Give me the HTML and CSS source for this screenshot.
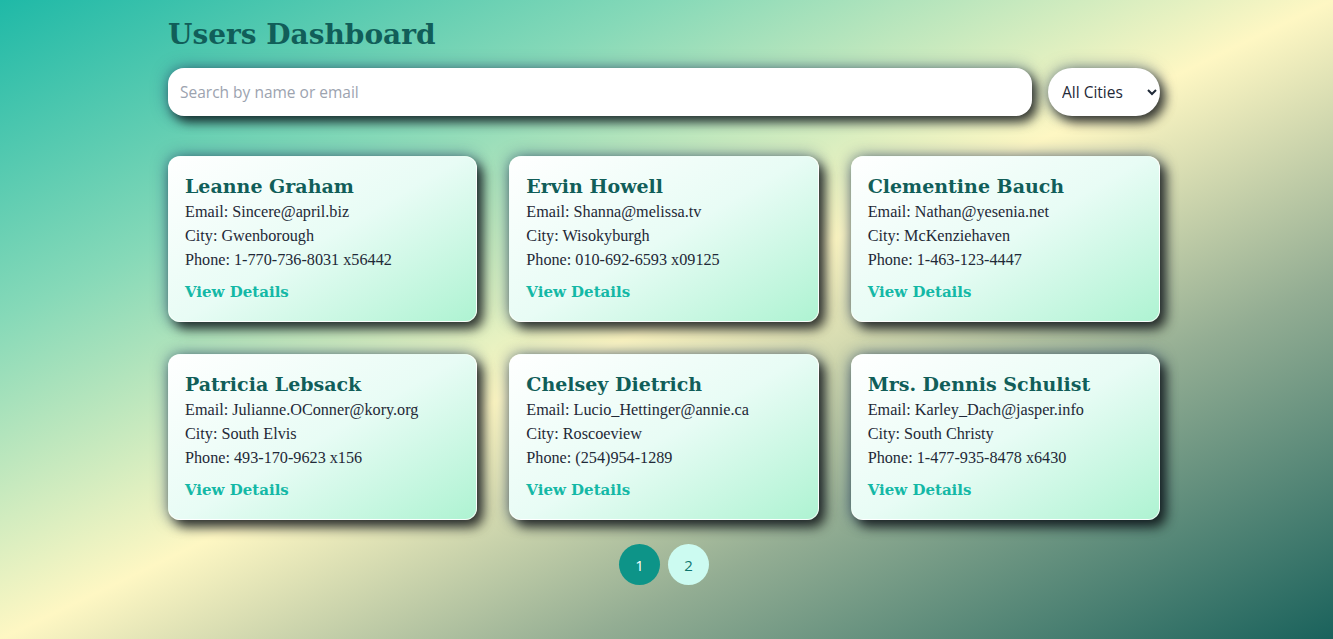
FILE: index.html
```html
<!DOCTYPE html>
<html lang="en">
<head>
<meta charset="utf-8">
<title>Users Dashboard</title>
<link rel="stylesheet" href="styles.css">
</head>
<body>
<div class="page">
  <h1 class="title">Users Dashboard</h1>
  <div class="filters">
    <input class="search" type="text" placeholder="Search by name or email">
    <select class="city">
      <option>All Cities</option>
    </select>
  </div>
  <div class="grid">
    <div class="card">
      <h2 class="name">Leanne Graham</h2>
      <p class="line">Email: Sincere@april.biz</p>
      <p class="line">City: Gwenborough</p>
      <p class="line">Phone: 1-770-736-8031 x56442</p>
      <a class="details" href="#">View Details</a>
    </div>
    <div class="card">
      <h2 class="name">Ervin Howell</h2>
      <p class="line">Email: Shanna@melissa.tv</p>
      <p class="line">City: Wisokyburgh</p>
      <p class="line">Phone: 010-692-6593 x09125</p>
      <a class="details" href="#">View Details</a>
    </div>
    <div class="card">
      <h2 class="name">Clementine Bauch</h2>
      <p class="line">Email: Nathan@yesenia.net</p>
      <p class="line">City: McKenziehaven</p>
      <p class="line">Phone: 1-463-123-4447</p>
      <a class="details" href="#">View Details</a>
    </div>
    <div class="card">
      <h2 class="name">Patricia Lebsack</h2>
      <p class="line">Email: Julianne.OConner@kory.org</p>
      <p class="line">City: South Elvis</p>
      <p class="line">Phone: 493-170-9623 x156</p>
      <a class="details" href="#">View Details</a>
    </div>
    <div class="card">
      <h2 class="name">Chelsey Dietrich</h2>
      <p class="line">Email: Lucio_Hettinger@annie.ca</p>
      <p class="line">City: Roscoeview</p>
      <p class="line">Phone: (254)954-1289</p>
      <a class="details" href="#">View Details</a>
    </div>
    <div class="card">
      <h2 class="name">Mrs. Dennis Schulist</h2>
      <p class="line">Email: Karley_Dach@jasper.info</p>
      <p class="line">City: South Christy</p>
      <p class="line">Phone: 1-477-935-8478 x6430</p>
      <a class="details" href="#">View Details</a>
    </div>
  </div>
  <div class="pager">
    <button class="pg active">1</button>
    <button class="pg">2</button>
  </div>
</div>
</body>
</html>
```

FILE: styles.css
```css
* { box-sizing: border-box; }
html { height: 100%; }
body {
  margin: 0;
  min-height: 100%;
  font-family: "DejaVu Serif", Georgia, serif;
  color: #1f2937;
  background: linear-gradient(to bottom right, #1fb9a7 0%, #86d9b8 25%, #fef7c3 50%, #93ad93 72%, #1a625c 100%);
}
.page {
  width: 992px;
  margin: 0 0 0 calc(50% - 498.5px);
  padding: 17px 0 40px;
}
.title {
  margin: 0 0 15px;
  font-size: 28px;
  line-height: 36px;
  font-weight: bold;
  color: #115e59;
}
.filters {
  display: flex;
  gap: 16px;
  margin-bottom: 40px;
}
.search {
  flex: 1;
  height: 48px;
  border: none;
  border-radius: 16px;
  padding: 0 12px;
  font-family: "Open Sans", "Noto Sans", sans-serif;
  font-size: 15.5px;
  background: #fff;
  box-shadow: 5px 6px 11px rgba(0,0,0,0.7), 0 0 16px rgba(30,60,110,0.6);
  outline: none;
}
.search::placeholder { color: #9ca3af; }
.city {
  width: 112px;
  height: 48px;
  border: none;
  border-radius: 24px;
  padding: 0 8px 0 10px;
  font-family: "Open Sans", "Noto Sans", sans-serif;
  font-size: 15.5px;
  color: #1f2937;
  background: #fff;
  box-shadow: 5px 6px 11px rgba(0,0,0,0.7), 0 0 16px rgba(30,60,110,0.6);
}
.grid {
  display: grid;
  grid-template-columns: repeat(3, 1fr);
  gap: 32px;
}
.card {
  height: 166px;
  padding: 15px 16px;
  border: 1px solid rgba(255,255,255,0.7);
  border-radius: 12px;
  background: linear-gradient(150deg, #ffffff 0%, #e8fcf5 50%, #aef3d2 100%);
  box-shadow: 6px 7px 12px rgba(0,0,0,0.72), 0 0 16px rgba(30,60,110,0.65);
}
.name {
  margin: 0;
  font-size: 19px;
  line-height: 28px;
  font-weight: bold;
  color: #115e59;
}
.line {
  margin: 0;
  font-family: "Liberation Serif", Georgia, serif;
  font-size: 16.2px;
  line-height: 24px;
}
.details {
  display: block;
  margin-top: 7px;
  font-size: 15px;
  line-height: 26px;
  font-weight: bold;
  color: #14b8a6;
  text-decoration: none;
}
.pager {
  display: flex;
  justify-content: center;
  gap: 8px;
  margin-top: 24px;
}
.pg {
  width: 41px;
  height: 41px;
  border-radius: 50%;
  border: none;
  font-family: "Open Sans", "Noto Sans", sans-serif;
  font-size: 15px;
  background: #ccfbf1;
  color: #0f766e;
  padding: 0;
}
.pg.active {
  background: #0d9488;
  color: #fff;
}
```
